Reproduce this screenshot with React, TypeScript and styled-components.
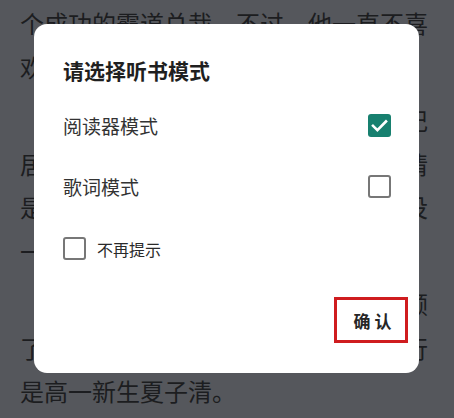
import React, { useState } from "react";
import styled, { createGlobalStyle } from "styled-components";

const Global = createGlobalStyle`
  html, body { margin: 0; padding: 0; }
  body {
    width: 454px;
    height: 418px;
    overflow: hidden;
    background: #55575c;
    font-family: "Noto Sans CJK SC", "Noto Sans", sans-serif;
  }
`;

const Page = styled.div`
  padding: 1px 26px 0 20px;
  color: #1c1d20;
  font-size: 24px;
  line-height: 43.5px;
`;

const Paragraph = styled.div`
  margin-bottom: 10px;
`;

const Line = styled.div<{ $indent?: boolean }>`
  white-space: nowrap;
  padding-left: ${(p) => (p.$indent ? "48px" : "0")};
`;

const Overlay = styled.div`
  position: fixed;
  inset: 0;
  padding: 24px 0 0 34px;
`;

const Dialog = styled.div`
  width: 385px;
  height: 349px;
  box-sizing: border-box;
  background: #ffffff;
  border-radius: 13px;
  padding: 31px 28px 30px 29px;
  display: flex;
  flex-direction: column;
`;

const Title = styled.div`
  font-size: 21px;
  line-height: 30px;
  font-weight: 700;
  color: #1f1f1f;
  margin-bottom: 10px;
`;

const OptionRow = styled.div<{ $h: number }>`
  height: ${(p) => p.$h}px;
  display: flex;
  align-items: center;
  justify-content: space-between;
  font-size: 19px;
  color: #333333;
`;

const RemindRow = styled.label`
  height: 63px;
  display: flex;
  align-items: center;
  gap: 11px;
  font-size: 16px;
  color: #2a2a2a;
`;

const Box = styled.span<{ $checked: boolean }>`
  width: 23px;
  height: 23px;
  box-sizing: border-box;
  border-radius: 3px;
  flex: none;
  display: flex;
  align-items: center;
  justify-content: center;
  background: ${(p) => (p.$checked ? "#17806f" : "#ffffff")};
  border: ${(p) => (p.$checked ? "none" : "2.5px solid #777777")};
`;

const Footer = styled.div`
  margin-top: auto;
  margin-right: -17px;
  display: flex;
  justify-content: flex-end;
`;

const ConfirmButton = styled.button`
  width: 74px;
  height: 46px;
  box-sizing: border-box;
  border: 3px solid #cf1c1f;
  background: #ffffff;
  padding: 0 0 0 3px;
  font-family: "Noto Sans CJK SC", "Noto Sans", sans-serif;
  font-size: 17px;
  font-weight: 700;
  color: #262626;
  display: flex;
  align-items: center;
  justify-content: center;
`;

function CheckBox({ checked }: { checked: boolean }) {
  return (
    <Box $checked={checked}>
      {checked && (
        <svg width="23" height="23" viewBox="0 0 23 23">
          <path
            d="M5 11.8 L9.4 16.2 L18 7.4"
            fill="none"
            stroke="#ffffff"
            strokeWidth="2.6"
            strokeLinecap="square"
          />
        </svg>
      )}
    </Box>
  );
}

export default function App() {
  const [reader, setReader] = useState(true);
  const [lyric, setLyric] = useState(false);
  const [noRemind, setNoRemind] = useState(false);
  return (
    <>
      <Global />
      <Page>
        <Paragraph>
          <Line>个成功的霸道总裁，不过，他一直不喜</Line>
          <Line>欢被人这样称呼。</Line>
        </Paragraph>
        <Paragraph>
          <Line $indent>小时候他常常拿着画笔，随手涂记</Line>
          <Line>居住的地方，画下身边的人和事，表情</Line>
          <Line>是他最喜欢画的，可惜家里人从来都没</Line>
          <Line>一个人支持他。</Line>
        </Paragraph>
        <Paragraph>
          <Line $indent>直到那一天，他在画展上偶然回顾</Line>
          <Line>了一眼，看到了一幅画，于是决定前行</Line>
          <Line>是高一新生夏子清。</Line>
        </Paragraph>
      </Page>
      <Overlay>
        <Dialog>
          <Title>请选择听书模式</Title>
          <OptionRow $h={61} onClick={() => setReader(!reader)}>
            <span>阅读器模式</span>
            <CheckBox checked={reader} />
          </OptionRow>
          <OptionRow $h={61} onClick={() => setLyric(!lyric)}>
            <span>歌词模式</span>
            <CheckBox checked={lyric} />
          </OptionRow>
          <RemindRow onClick={() => setNoRemind(!noRemind)}>
            <CheckBox checked={noRemind} />
            <span>不再提示</span>
          </RemindRow>
          <Footer>
            <ConfirmButton>确 认</ConfirmButton>
          </Footer>
        </Dialog>
      </Overlay>
    </>
  );
}
